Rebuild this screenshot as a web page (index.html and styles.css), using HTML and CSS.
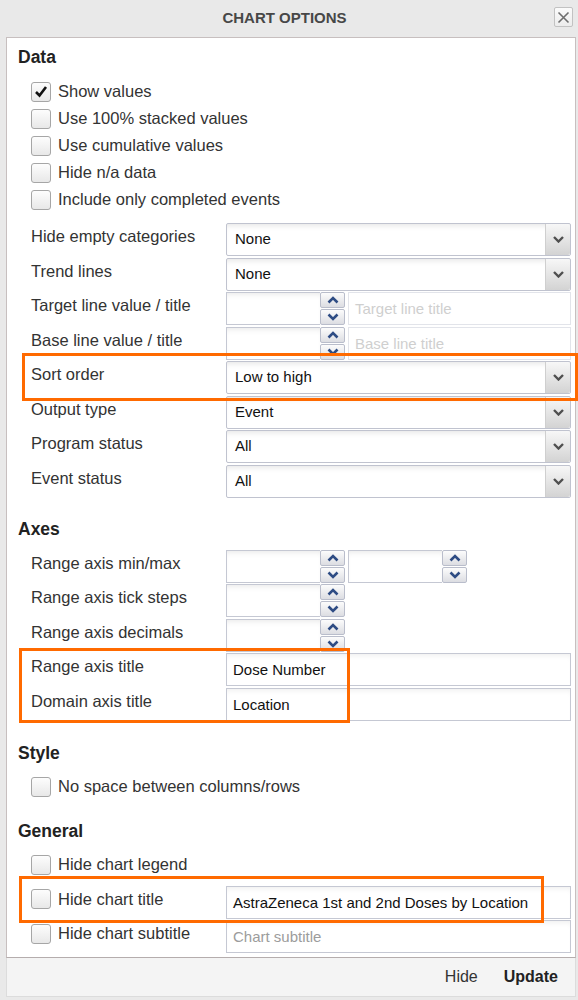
FILE: index.html
```html
<!DOCTYPE html>
<html>
<head>
<meta charset="utf-8">
<link rel="stylesheet" href="styles.css">
</head>
<body>
<div class="dialog">
  <div class="titlebar">
    <div class="title">CHART OPTIONS</div>
    <div class="close"><svg width="13" height="13" viewBox="0 0 13 13"><path d="M1.5 1.5 L11.5 11.5 M11.5 1.5 L1.5 11.5" stroke="#6e6e6e" stroke-width="1.6" fill="none"/></svg></div>
  </div>

  <div class="panel">
    <div class="section">
      <div class="section-title">Data</div>
      <div class="checks">
        <div class="check"><span class="box"><svg width="14" height="13" viewBox="0 0 14 13"><path d="M2 7 L5.5 10.5 L12 2" fill="none" stroke="#111" stroke-width="2.6"/></svg></span>Show values</div>
        <div class="check"><span class="box"></span>Use 100% stacked values</div>
        <div class="check"><span class="box"></span>Use cumulative values</div>
        <div class="check"><span class="box"></span>Hide n/a data</div>
        <div class="check"><span class="box"></span>Include only completed events</div>
      </div>
      <div class="rows">
        <div class="row"><div class="label">Hide empty categories</div>
          <div class="select"><span class="val">None</span><span class="arrow"><svg width="11" height="7" viewBox="0 0 11 7"><path d="M1 1 L5.5 5.5 L10 1" fill="none" stroke="#4f4f4f" stroke-width="2.4"/></svg></span></div></div>
        <div class="row"><div class="label">Trend lines</div>
          <div class="select"><span class="val">None</span><span class="arrow"><svg width="11" height="7" viewBox="0 0 11 7"><path d="M1 1 L5.5 5.5 L10 1" fill="none" stroke="#4f4f4f" stroke-width="2.4"/></svg></span></div></div>
        <div class="row"><div class="label">Target line value / title</div>
          <div class="pair">
            <div class="num"><div class="field"></div><div class="spin"><span class="sb"><svg width="12" height="8" viewBox="0 0 12 8"><path d="M1.5 6.5 L6 2 L10.5 6.5" fill="none" stroke="#2e4c84" stroke-width="2.6"/></svg></span><span class="sb"><svg width="12" height="8" viewBox="0 0 12 8"><path d="M1.5 1.5 L6 6 L10.5 1.5" fill="none" stroke="#2e4c84" stroke-width="2.6"/></svg></span></div></div>
            <div class="text ph light">Target line title</div>
          </div></div>
        <div class="row"><div class="label">Base line value / title</div>
          <div class="pair">
            <div class="num"><div class="field"></div><div class="spin"><span class="sb"><svg width="12" height="8" viewBox="0 0 12 8"><path d="M1.5 6.5 L6 2 L10.5 6.5" fill="none" stroke="#2e4c84" stroke-width="2.6"/></svg></span><span class="sb"><svg width="12" height="8" viewBox="0 0 12 8"><path d="M1.5 1.5 L6 6 L10.5 1.5" fill="none" stroke="#2e4c84" stroke-width="2.6"/></svg></span></div></div>
            <div class="text ph light">Base line title</div>
          </div></div>
        <div class="row"><div class="label">Sort order</div>
          <div class="select"><span class="val">Low to high</span><span class="arrow"><svg width="11" height="7" viewBox="0 0 11 7"><path d="M1 1 L5.5 5.5 L10 1" fill="none" stroke="#4f4f4f" stroke-width="2.4"/></svg></span></div></div>
        <div class="row"><div class="label">Output type</div>
          <div class="select"><span class="val">Event</span><span class="arrow"><svg width="11" height="7" viewBox="0 0 11 7"><path d="M1 1 L5.5 5.5 L10 1" fill="none" stroke="#4f4f4f" stroke-width="2.4"/></svg></span></div></div>
        <div class="row"><div class="label">Program status</div>
          <div class="select"><span class="val">All</span><span class="arrow"><svg width="11" height="7" viewBox="0 0 11 7"><path d="M1 1 L5.5 5.5 L10 1" fill="none" stroke="#4f4f4f" stroke-width="2.4"/></svg></span></div></div>
        <div class="row"><div class="label">Event status</div>
          <div class="select"><span class="val">All</span><span class="arrow"><svg width="11" height="7" viewBox="0 0 11 7"><path d="M1 1 L5.5 5.5 L10 1" fill="none" stroke="#4f4f4f" stroke-width="2.4"/></svg></span></div></div>
      </div>
    </div>

    <div class="section axes">
      <div class="section-title">Axes</div>
      <div class="rows rows-axes">
        <div class="row"><div class="label">Range axis min/max</div>
          <div class="pair">
            <div class="num"><div class="field"></div><div class="spin"><span class="sb"><svg width="12" height="8" viewBox="0 0 12 8"><path d="M1.5 6.5 L6 2 L10.5 6.5" fill="none" stroke="#2e4c84" stroke-width="2.6"/></svg></span><span class="sb"><svg width="12" height="8" viewBox="0 0 12 8"><path d="M1.5 1.5 L6 6 L10.5 1.5" fill="none" stroke="#2e4c84" stroke-width="2.6"/></svg></span></div></div>
            <div class="num"><div class="field"></div><div class="spin"><span class="sb"><svg width="12" height="8" viewBox="0 0 12 8"><path d="M1.5 6.5 L6 2 L10.5 6.5" fill="none" stroke="#2e4c84" stroke-width="2.6"/></svg></span><span class="sb"><svg width="12" height="8" viewBox="0 0 12 8"><path d="M1.5 1.5 L6 6 L10.5 1.5" fill="none" stroke="#2e4c84" stroke-width="2.6"/></svg></span></div></div>
          </div></div>
        <div class="row"><div class="label">Range axis tick steps</div>
          <div class="pair">
            <div class="num"><div class="field"></div><div class="spin"><span class="sb"><svg width="12" height="8" viewBox="0 0 12 8"><path d="M1.5 6.5 L6 2 L10.5 6.5" fill="none" stroke="#2e4c84" stroke-width="2.6"/></svg></span><span class="sb"><svg width="12" height="8" viewBox="0 0 12 8"><path d="M1.5 1.5 L6 6 L10.5 1.5" fill="none" stroke="#2e4c84" stroke-width="2.6"/></svg></span></div></div>
          </div></div>
        <div class="row"><div class="label">Range axis decimals</div>
          <div class="pair">
            <div class="num"><div class="field"></div><div class="spin"><span class="sb"><svg width="12" height="8" viewBox="0 0 12 8"><path d="M1.5 6.5 L6 2 L10.5 6.5" fill="none" stroke="#2e4c84" stroke-width="2.6"/></svg></span><span class="sb"><svg width="12" height="8" viewBox="0 0 12 8"><path d="M1.5 1.5 L6 6 L10.5 1.5" fill="none" stroke="#2e4c84" stroke-width="2.6"/></svg></span></div></div>
          </div></div>
        <div class="row"><div class="label">Range axis title</div>
          <div class="text">Dose Number</div></div>
        <div class="row"><div class="label">Domain axis title</div>
          <div class="text">Location</div></div>
      </div>
    </div>

    <div class="section style">
      <div class="section-title">Style</div>
      <div class="checks">
        <div class="check"><span class="box"></span>No space between columns/rows</div>
      </div>
    </div>

    <div class="section general">
      <div class="section-title">General</div>
      <div class="checks">
        <div class="check"><span class="box"></span>Hide chart legend</div>
      </div>
      <div class="rows rows-general">
        <div class="row"><div class="check"><span class="box"></span>Hide chart title</div>
          <div class="text">AstraZeneca 1st and 2nd Doses by Location</div></div>
        <div class="row"><div class="check"><span class="box"></span>Hide chart subtitle</div>
          <div class="text ph">Chart subtitle</div></div>
      </div>
    </div>
  </div>

  <div class="footer">
    <span class="btn">Hide</span>
    <span class="btn primary">Update</span>
  </div>

  <div class="hl hl-sort"></div>
  <div class="hl hl-axes"></div>
  <div class="hl hl-title"></div>
</div>
</body>
</html>
```

FILE: styles.css
```css
* { box-sizing: border-box; margin: 0; padding: 0; }
html, body { width: 578px; height: 1000px; overflow: hidden; }
body {
  background: #e9e9e9;
  font-family: "Liberation Sans", Arial, sans-serif;
  color: #333;
}
.dialog {
  position: relative;
  width: 578px;
  height: 1000px;
  display: flex;
  flex-direction: column;
  padding: 0 2px 0 6px;
}
.titlebar {
  height: 37px;
  flex: none;
  display: flex;
  align-items: center;
  padding: 0 3px 3px 9px;
}
.title {
  flex: 1;
  text-align: center;
  font-size: 15px;
  font-weight: bold;
  color: #474747;
}
.close {
  width: 19px;
  height: 20px;
  border: 1px solid #c2c2c2;
  border-radius: 2px;
  background: linear-gradient(#fbfbfb, #ececec);
  display: flex;
  align-items: center;
  justify-content: center;
}
.panel {
  height: 921px;
  flex: none;
  background: #fff;
  border: 1px solid #c7bfbf;
  border-bottom-color: #b5adad;
  padding: 9px 0 0 11px;
}
.section-title {
  font-size: 17.5px;
  font-weight: bold;
  line-height: 20px;
  color: #222;
}
.checks {
  margin-top: 11px;
  padding-left: 13px;
}
.check {
  display: flex;
  align-items: center;
  height: 27px;
  gap: 7px;
  font-size: 16.5px;
  color: #333;
  white-space: nowrap;
}
.box {
  flex: none;
  width: 20px;
  height: 20px;
  border: 1px solid #a6a6a6;
  border-radius: 3px;
  background: linear-gradient(#fdfdfd, #e8e8e8);
  display: flex;
  align-items: center;
  justify-content: center;
}
.rows {
  margin-top: 10px;
  padding-left: 13px;
  display: flex;
  flex-direction: column;
  gap: 1.5px;
}
.row {
  display: grid;
  grid-template-columns: 195px 345px;
  height: 33px;
}
.label {
  font-size: 16.5px;
  line-height: 20px;
  padding-top: 3px;
  color: #333;
  white-space: nowrap;
}
.select {
  display: flex;
  border: 1px solid #c0c3cf;
  border-radius: 2px;
  background: #fff;
  box-shadow: inset 0 5px 6px -4px rgba(0, 0, 0, 0.12);
}
.select .val {
  flex: 1;
  padding-left: 8px;
  font-size: 15px;
  line-height: 30px;
  color: #111;
}
.select .arrow {
  width: 25px;
  border-left: 1px solid #cfcfcf;
  border-radius: 0 2px 2px 0;
  background: linear-gradient(#f7f7f7, #d3d3d3);
  display: flex;
  align-items: center;
  justify-content: center;
}
.pair {
  display: flex;
  gap: 3px;
}
.num {
  display: flex;
  width: 119px;
  height: 33px;
  flex: none;
}
.num .field {
  flex: 1;
  border: 1px solid #c5c8d3;
  border-right: none;
  box-shadow: inset 0 5px 6px -4px rgba(0, 0, 0, 0.1);
}
.spin {
  width: 25px;
  display: flex;
  flex-direction: column;
  gap: 1px;
}
.sb {
  flex: 1;
  border: 1px solid #b9bdcb;
  border-radius: 2px;
  background: linear-gradient(#fcfcfc, #dcdde2);
  display: flex;
  align-items: center;
  justify-content: center;
}
.text {
  flex: 1;
  height: 33px;
  border: 1px solid #c5c8d3;
  box-shadow: inset 0 5px 6px -4px rgba(0, 0, 0, 0.08);
  padding-left: 6px;
  font-size: 15px;
  line-height: 31px;
  color: #111;
  white-space: nowrap;
  overflow: hidden;
}
.text.ph { color: #9c9c9c; }
.text.ph.light { color: #cfcfcf; border-color: #e2e4ea; box-shadow: none; }
.axes { margin-top: 21px; }
.rows-axes { margin-top: 11px; }
.style { margin-top: 22px; }
.style .checks { margin-top: 10.5px; }
.general { margin-top: 20.5px; }
.general .checks { margin-top: 10.5px; }
.rows-general { margin-top: 7.5px; }
.rows-general .check { padding-left: 0; }
.footer {
  height: 39px;
  flex: none;
  background: #f4f4f4;
  border: 1px solid #dcdcdc;
  border-top: none;
  display: flex;
  justify-content: flex-end;
  align-items: center;
  gap: 26px;
  padding-right: 17px;
  font-size: 16px;
}
.btn { color: #333; }
.btn.primary { font-weight: bold; color: #222; }
.hl {
  position: absolute;
  border: 3px solid #ff6a00;
}
.hl-sort { left: 22px; top: 353px; width: 556px; height: 48px; }
.hl-axes { left: 19px; top: 648px; width: 331px; height: 75px; }
.hl-title { left: 19px; top: 876px; width: 525px; height: 47px; }
```
